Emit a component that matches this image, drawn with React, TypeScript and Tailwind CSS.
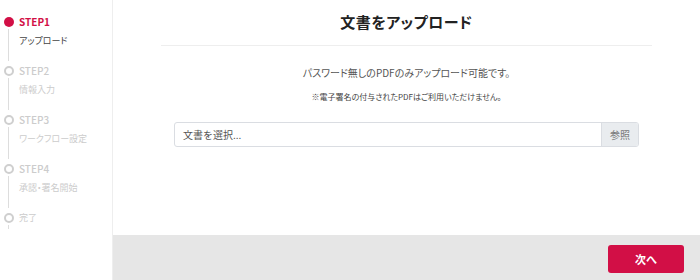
const steps = [
  { step: "STEP1", label: "アップロード" },
  { step: "STEP2", label: "情報入力" },
  { step: "STEP3", label: "ワークフロー設定" },
  { step: "STEP4", label: "承認・署名開始" },
];

const font = { fontFamily: '"Noto Sans CJK JP", "Noto Sans", sans-serif' };

const Sidebar = () => {
  return (
    <aside className="w-[113px] shrink-0 border-r border-[#eeeeee] bg-white pt-[12px]">
      {steps.map((s, i) => {
        const active = i === 0;
        return (
          <div key={s.step} className="flex h-[49px]">
            <div className="flex w-[17px] flex-col items-center pt-[5px]">
              {active ? (
                <span className="h-[10px] w-[10px] rounded-full bg-[#d20f46]" />
              ) : (
                <span className="h-[10px] w-[10px] rounded-full border-2 border-[#cfcfcf]" />
              )}
              <span className="mt-[2px] w-px flex-1 bg-[#dddddd]" />
            </div>
            <div className="pl-[2px]">
              <div
                className={`text-[10px] leading-[20px] ${
                  active ? "font-bold text-[#d20f46]" : "font-medium text-[#cccccc]"
                }`}
              >
                {s.step}
              </div>
              <div
                className={`text-[9px] leading-[18px] [font-feature-settings:'palt'] ${
                  active ? "text-[#444444]" : "text-[#cccccc]"
                }`}
              >
                {s.label}
              </div>
            </div>
          </div>
        );
      })}
      <div className="flex">
        <div className="flex w-[17px] flex-col items-center pt-[5px]">
          <span className="h-[10px] w-[10px] rounded-full border-2 border-[#cfcfcf]" />
          <span className="mt-[2px] h-[4px] w-px bg-[#dddddd]" />
        </div>
        <div className="pl-[2px] text-[9px] leading-[20px] text-[#cccccc]">完了</div>
      </div>
    </aside>
  );
};

export default function App() {
  return (
    <div className="flex h-[280px] w-[700px] bg-white" style={font}>
      <Sidebar />
      <main className="flex flex-1 flex-col">
        <div className="flex-1 px-[48px]">
          <div className="flex h-[46px] items-center justify-center border-b border-[#eeeeee]">
            <h1 className="text-[15px] font-bold tracking-[0.5px] text-[#222222] [font-feature-settings:'palt']">
              文書をアップロード
            </h1>
          </div>
          <p className="mt-[18px] text-center text-[10px] leading-[18px] text-[#555555] [font-feature-settings:'palt']">
            パスワード無しのPDFのみアップロード可能です。
          </p>
          <p className="mt-[8px] text-center text-[8px] leading-[14px] text-[#444444] [font-feature-settings:'palt']">
            ※電子署名の付与されたPDFはご利用いただけません。
          </p>
          <div className="mx-[13px] mt-[18px] flex h-[25px] overflow-hidden rounded-[3px] border border-[#dadde2]">
            <div className="flex flex-1 items-center pl-[8px] text-[10px] text-[#555555]">文書を選択...</div>
            <div className="flex w-[37px] items-center justify-center border-l border-[#dadde2] bg-[#e9ecef] text-[10px] text-[#777777]">
              参照
            </div>
          </div>
        </div>
        <div className="flex h-[45px] justify-end bg-[#e6e6e6] pr-[16px] pt-[10px]">
          <button className="h-[28px] w-[76px] rounded-[3px] bg-[#d20f46] text-[11px] font-bold text-white">
            次へ
          </button>
        </div>
      </main>
    </div>
  );
}
